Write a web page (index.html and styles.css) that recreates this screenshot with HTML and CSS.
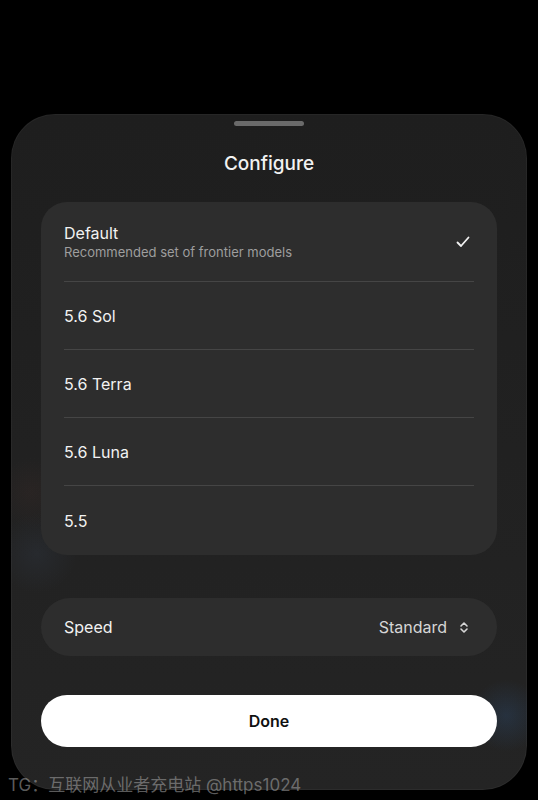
FILE: index.html
```html
<!DOCTYPE html>
<html>
<head>
  <title>Configure</title>
  <link rel="stylesheet" href="styles.css">
</head>
<body>
  <div class="sheet">
    <div class="handle"></div>
    <h1 class="title">Configure</h1>

    <div class="card models">
      <div class="row row-first">
        <div class="row-text">
          <div class="row-label">Default</div>
          <div class="row-sub">Recommended set of frontier models</div>
        </div>
        <svg class="check" width="14" height="12" viewBox="0 0 14 12">
          <path d="M1.5 6.5 L5 10 L12.5 1.5" fill="none" stroke="#f2f2f2" stroke-width="1.8" stroke-linecap="round" stroke-linejoin="round"/>
        </svg>
      </div>
      <div class="row"><div class="row-label">5.6 Sol</div></div>
      <div class="row"><div class="row-label">5.6 Terra</div></div>
      <div class="row"><div class="row-label">5.6 Luna</div></div>
      <div class="row row-last"><div class="row-label">5.5</div></div>
    </div>

    <div class="card speed">
      <div class="row-label">Speed</div>
      <div class="speed-value">
        <span>Standard</span>
        <svg width="10" height="13" viewBox="0 0 10 13">
          <path d="M2 5 L5 2 L8 5 M2 8 L5 11 L8 8" fill="none" stroke="#d6d6d6" stroke-width="1.6" stroke-linecap="round" stroke-linejoin="round"/>
        </svg>
      </div>
    </div>

    <button class="done" type="button">Done</button>
  </div>

  <div class="watermark">TG：互联网从业者充电站 @https1024</div>
</body>
</html>
```

FILE: styles.css
```css
body {
  margin: 0;
  padding: 0;
  background-color: #000;
  font-family: Inter, "Noto Sans", sans-serif;
  color: #f2f2f2;
  height: 800px;
  overflow: hidden;
}

.sheet {
  box-sizing: border-box;
  width: 516px;
  height: 676px;
  margin: 114px 0 0 11px;
  padding: 7px 30px 0;
  border-radius: 44px;
  background-color: #202020;
  background-image:
    radial-gradient(circle at 96% 89%, rgba(50, 100, 160, 0.22), rgba(50, 100, 160, 0) 36px),
    radial-gradient(circle at 4% 56%, rgba(110, 60, 50, 0.1), rgba(110, 60, 50, 0) 35px),
    radial-gradient(circle at 5% 65%, rgba(70, 90, 120, 0.14), rgba(70, 90, 120, 0) 40px),
    linear-gradient(#1e1e1e, #242424);
  box-shadow: inset 0 0 0 1px rgba(255, 255, 255, 0.04);
}

.handle {
  width: 70px;
  height: 5px;
  margin: 0 auto;
  border-radius: 3px;
  background-color: #6a6a6a;
}

.title {
  margin: 26px 0 26px;
  font-size: 19px;
  line-height: 24px;
  font-weight: 500;
  text-align: center;
}

.card {
  background-color: #2d2d2d;
}

.models {
  border-radius: 26px;
}

.row {
  box-sizing: border-box;
  display: flex;
  align-items: center;
  justify-content: space-between;
  height: 68px;
  margin: 0 23px;
  border-bottom: 1px solid #454545;
}

.row-first {
  height: 80px;
}

.row-last {
  height: 69px;
  border-bottom: none;
}

.row-label {
  font-size: 16px;
  line-height: 20px;
}

.row-sub {
  margin-top: 1px;
  font-size: 13px;
  line-height: 17px;
  color: #9e9e9e;
}

.check {
  margin-right: 4px;
}

.speed {
  display: flex;
  align-items: center;
  justify-content: space-between;
  height: 58px;
  margin-top: 43px;
  padding: 0 28px 0 23px;
  border-radius: 29px;
}

.speed-value {
  display: flex;
  align-items: center;
  gap: 12px;
  font-size: 16px;
  color: #d6d6d6;
}

.speed-value svg {
  display: block;
}

.done {
  display: block;
  width: 100%;
  height: 52px;
  margin-top: 39px;
  border: none;
  border-radius: 26px;
  background-color: #fff;
  color: #111;
  font-family: Inter, "Noto Sans", sans-serif;
  font-size: 16px;
  font-weight: 600;
}

.watermark {
  position: absolute;
  left: 8px;
  top: 775px;
  font-family: Inter, "Noto Sans CJK SC", sans-serif;
  font-size: 17px;
  line-height: 20px;
  color: rgba(170, 170, 170, 0.55);
}
```
